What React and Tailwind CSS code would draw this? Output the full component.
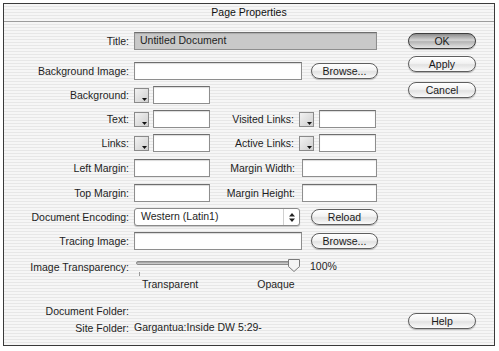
import React from 'react'

const font = { fontFamily: '"Liberation Sans", Arial, sans-serif' }

function Label({ w = 'w-[125px]', children }) {
  return <div className={`${w} shrink-0 text-right text-[10.5px] leading-none text-[#1e1e1e]`}>{children}</div>
}

function Field({ w, gray = false, children }) {
  return (
    <div
      className={`${w} h-[18px] shrink-0 border border-[#8e8e8e] border-t-[#6e6e6e] shadow-[inset_0_1px_1px_rgba(0,0,0,0.15)] flex items-center px-[5px] text-[10.5px] text-[#1e1e1e] ${
        gray ? 'bg-[#c9c9c9]' : 'bg-white'
      }`}
    >
      {children}
    </div>
  )
}

function Swatch() {
  return (
    <div className="w-[15px] h-[15px] shrink-0 border border-[#8a8a8a] bg-[linear-gradient(135deg,#f2f2f2,#cfcfcf)] relative">
      <svg className="absolute right-[1px] bottom-[1px]" width="5" height="3" viewBox="0 0 5 3">
        <path d="M0 0 H5 L2.5 3 Z" fill="#111" />
      </svg>
    </div>
  )
}

function AquaButton({ w = 'w-[68px]', primary = false, children }) {
  return (
    <div
      className={`${w} h-[16px] shrink-0 rounded-full border flex items-center justify-center text-[10.5px] leading-none text-[#1a1a1a] shadow-[0_1px_1px_rgba(0,0,0,0.25)] ${
        primary
          ? 'border-[#3e3e3e] bg-[linear-gradient(to_bottom,#8c8c8c,#d6d6d6_45%,#b5b5b5_55%,#e4e4e4)]'
          : 'border-[#5e5e5e] bg-[linear-gradient(to_bottom,#ffffff,#f2f2f2_45%,#e2e2e2_55%,#fafafa)]'
      }`}
    >
      {children}
    </div>
  )
}

function Row({ mt, h = 'h-[18px]', children }) {
  return <div className={`${mt} ${h} flex items-center`}>{children}</div>
}

export default function App() {
  return (
    <div className="w-[499px] h-[351px] bg-white overflow-hidden" style={font}>
      <div className="ml-[3px] mt-[3px] w-[492px] h-[343px] border border-[#3a3a3a] flex flex-col bg-[repeating-linear-gradient(to_bottom,#f6f6f6_0px,#f6f6f6_2px,#e7e7e7_2px,#e7e7e7_3px)]">
        <div className="h-[18px] shrink-0 border-b border-[#9c9c9c] flex items-center justify-center text-[10.5px] text-[#111]">
          Page Properties
        </div>

        <div className="flex flex-1">
          <div className="w-[376px] shrink-0 flex flex-col">
            <Row mt="mt-[10px]">
              <Label>Title:</Label>
              <div className="ml-[5px]"><Field w="w-[243px]" gray>Untitled Document</Field></div>
            </Row>

            <Row mt="mt-[12px]">
              <Label>Background Image:</Label>
              <div className="ml-[5px]"><Field w="w-[168px]" /></div>
              <div className="ml-[9px]"><AquaButton w="w-[67px]">Browse...</AquaButton></div>
            </Row>

            <Row mt="mt-[6px]">
              <Label>Background:</Label>
              <div className="ml-[5px]"><Swatch /></div>
              <div className="ml-[4px]"><Field w="w-[57px]" /></div>
            </Row>

            <Row mt="mt-[6px]">
              <Label>Text:</Label>
              <div className="ml-[5px]"><Swatch /></div>
              <div className="ml-[4px]"><Field w="w-[57px]" /></div>
              <Label w="w-[84px]">Visited Links:</Label>
              <div className="ml-[5px]"><Swatch /></div>
              <div className="ml-[5px]"><Field w="w-[57px]" /></div>
            </Row>

            <Row mt="mt-[6px]">
              <Label>Links:</Label>
              <div className="ml-[5px]"><Swatch /></div>
              <div className="ml-[4px]"><Field w="w-[57px]" /></div>
              <Label w="w-[84px]">Active Links:</Label>
              <div className="ml-[5px]"><Swatch /></div>
              <div className="ml-[5px]"><Field w="w-[57px]" /></div>
            </Row>

            <Row mt="mt-[7px]">
              <Label>Left Margin:</Label>
              <div className="ml-[5px]"><Field w="w-[76px]" /></div>
              <Label w="w-[85px]">Margin Width:</Label>
              <div className="ml-[7px]"><Field w="w-[75px]" /></div>
            </Row>

            <Row mt="mt-[7px]">
              <Label>Top Margin:</Label>
              <div className="ml-[5px]"><Field w="w-[76px]" /></div>
              <Label w="w-[85px]">Margin Height:</Label>
              <div className="ml-[7px]"><Field w="w-[75px]" /></div>
            </Row>

            <Row mt="mt-[6px]">
              <Label>Document Encoding:</Label>
              <div className="ml-[5px] w-[166px] h-[18px] rounded-[3px] border border-[#8a8a8a] bg-white shadow-[0_1px_1px_rgba(0,0,0,0.2)] flex items-center text-[10.5px] text-[#1e1e1e]">
                <span className="pl-[6px] flex-1">Western (Latin1)</span>
                <div className="w-[16px] h-full border-l border-[#d0d0d0] flex items-center justify-center">
                  <svg width="6" height="9" viewBox="0 0 6 9">
                    <path d="M3 0 L6 3.5 H0 Z M3 9 L6 5.5 H0 Z" fill="#222" />
                  </svg>
                </div>
              </div>
              <div className="ml-[11px]"><AquaButton w="w-[67px]">Reload</AquaButton></div>
            </Row>

            <Row mt="mt-[6px]">
              <Label>Tracing Image:</Label>
              <div className="ml-[5px]"><Field w="w-[168px]" /></div>
              <div className="ml-[9px]"><AquaButton w="w-[67px]">Browse...</AquaButton></div>
            </Row>

            <Row mt="mt-[9px]" h="h-[16px]">
              <Label>Image Transparency:</Label>
              <div className="ml-[5px] w-[168px] h-full relative">
                <div className="absolute left-[2px] right-[8px] top-[2px] h-[4px] rounded-full border border-[#8c8c8c] bg-[linear-gradient(to_bottom,#9a9a9a,#d8d8d8)]" />
                <div className="absolute left-[5px] top-[13px] w-px h-[4px] bg-[#9a9a9a]" />
                <svg className="absolute left-[153px] top-[-1px]" width="14" height="15" viewBox="0 0 14 15">
                  <path d="M1.5 1.5 H12.5 V8.5 L7 13.5 L1.5 8.5 Z" fill="#f4f4f4" stroke="#7a7a7a" strokeWidth="1" />
                </svg>
              </div>
              <span className="ml-[8px] text-[10.5px] text-[#1e1e1e]">100%</span>
            </Row>

            <Row mt="mt-[3px]" h="h-[14px]">
              <span className="ml-[138px] text-[10.5px] text-[#1e1e1e]">Transparent</span>
              <span className="ml-[59px] text-[10.5px] text-[#1e1e1e]">Opaque</span>
            </Row>

            <Row mt="mt-[12px]" h="h-[14px]">
              <Label>Document Folder:</Label>
            </Row>

            <Row mt="mt-[3px]" h="h-[14px]">
              <Label>Site Folder:</Label>
              <span className="ml-[5px] text-[10.5px] text-[#1e1e1e]">Gargantua:Inside DW 5:29-</span>
            </Row>
          </div>

          <div className="flex flex-col pl-[28px]">
            <div className="mt-[11px]"><AquaButton primary>OK</AquaButton></div>
            <div className="mt-[7px]"><AquaButton>Apply</AquaButton></div>
            <div className="mt-[10px]"><AquaButton>Cancel</AquaButton></div>
            <div className="mt-[215px]"><AquaButton>Help</AquaButton></div>
          </div>
        </div>
      </div>
    </div>
  )
}
